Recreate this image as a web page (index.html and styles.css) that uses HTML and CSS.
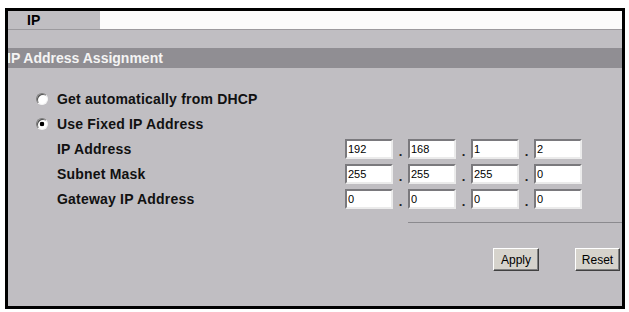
FILE: index.html
```html
<!DOCTYPE html>
<html>
<head>
 <meta charset="utf-8"/>
 <title>IP</title>
<link rel="stylesheet" href="styles.css">
</head>
<body>
<div class="frame">
 <div class="tabs">
  <div class="tab">IP</div>
 </div>

 <div class="header">IP Address Assignment</div>

 <form class="form">
  <div class="row radio-row">
   <input type="radio" name="mode" class="radio">
   <span class="label">Get automatically from DHCP</span>
  </div>
  <div class="row radio-row">
   <input type="radio" name="mode" class="radio" checked>
   <span class="label">Use Fixed IP Address</span>
  </div>
  <div class="row field-row">
   <span class="label field-label">IP Address</span>
   <div class="ip">
    <input class="octet" value="192"><span class="dot">.</span>
    <input class="octet" value="168"><span class="dot">.</span>
    <input class="octet" value="1"><span class="dot">.</span>
    <input class="octet" value="2">
   </div>
  </div>
  <div class="row field-row">
   <span class="label field-label">Subnet Mask</span>
   <div class="ip">
    <input class="octet" value="255"><span class="dot">.</span>
    <input class="octet" value="255"><span class="dot">.</span>
    <input class="octet" value="255"><span class="dot">.</span>
    <input class="octet" value="0">
   </div>
  </div>
  <div class="row field-row">
   <span class="label field-label">Gateway IP Address</span>
   <div class="ip">
    <input class="octet" value="0"><span class="dot">.</span>
    <input class="octet" value="0"><span class="dot">.</span>
    <input class="octet" value="0"><span class="dot">.</span>
    <input class="octet" value="0">
   </div>
  </div>

  <div class="rule"></div>

  <div class="buttons">
   <button type="button" class="btn">Apply</button>
   <button type="button" class="btn">Reset</button>
  </div>
 </form>
</div>
</body>
</html>
```

FILE: styles.css
```css
body {
 margin:       0;
 background:   #fff;
}

.frame {
 margin:       8px 0 0 5px;
 width:        620px;
 height:       301px;
 box-sizing:   border-box;
 border:       3px solid #000;
 background:   #c0bec2;
 font-family:  "Liberation Sans", Arial, sans-serif;
 overflow:     hidden;
}

/* tab strip */
.tabs {
 display:      flex;
 height:       18px;
 background:   #fbfbfb;
 border-bottom: 1px solid #9c9a9e;
}

.tab {
 width:        92px;
 box-sizing:   border-box;
 padding-left: 19px;
 background:   #c0bec2;
 font-size:    14px;
 font-weight:  bold;
 line-height:  18px;
 color:        #000;
}

/* section title */
.header {
 margin-top:   18px;
 height:       20px;
 background:   #908e93;
 color:        #f4f4f4;
 font-size:    14px;
 font-weight:  bold;
 line-height:  20px;
 text-indent:  -1px;
 overflow:     hidden;
 white-space:  nowrap;
}

.form {
 margin:       0;
 padding-top:  18px;
}

.row {
 display:      flex;
 align-items:  center;
 height:       25px;
}

.radio-row {
 padding-left: 28px;
}

.field-row {
 padding-left: 49px;
}

.label {
 font-size:    14px;
 font-weight:  bold;
 letter-spacing: 0.2px;
 color:        #111;
}

.field-label {
 width:        288px;
}

.radio {
 appearance:   none;
 -webkit-appearance: none;
 margin:       0 9px 0 0;
 width:        12px;
 height:       12px;
 box-sizing:   border-box;
 border-radius: 50%;
 border:       1px solid;
 border-color: #7c7c7c #f4f4f4 #f4f4f4 #7c7c7c;
 box-shadow:   inset 1px 1px 0 #505050;
 background:   #fff;
}

.radio:checked {
 background:   radial-gradient(circle, #000 0 2px, #fff 2.6px);
}

/* ip octets */
.ip {
 display:      flex;
 align-items:  center;
}

.octet {
 width:        48px;
 height:       20px;
 box-sizing:   border-box;
 margin:       0;
 padding:      0 0 0 1px;
 border:       2px solid;
 border-color: #7a797d #ebebeb #ebebeb #7a797d;
 background:   #fff;
 font-family:  "Liberation Sans", Arial, sans-serif;
 font-size:    11px;
 color:        #000;
 outline:      none;
}

.dot {
 width:        15px;
 text-align:   center;
 font-size:    13px;
 font-weight:  bold;
 line-height:  20px;
 padding-top:  6px;
 color:        #222;
}

.rule {
 margin:       11px 0 0 400px;
 border-top:   1px solid #8b8a8e;
}

.buttons {
 display:      flex;
 justify-content: flex-end;
 gap:          36px;
 margin-top:   25px;
 padding-right: 2px;
}

.btn {
 height:       23px;
 padding:      0;
 box-sizing:   border-box;
 background:   #d6d3cc;
 border:       1px solid;
 border-color: #fff #404040 #404040 #fff;
 box-shadow:   inset -1px -1px 0 #808080;
 font-family:  "Liberation Sans", Arial, sans-serif;
 font-size:    12px;
 color:        #000;
}

.btn:first-child {
 width:        46px;
}

.btn:last-child {
 width:        45px;
}
```
